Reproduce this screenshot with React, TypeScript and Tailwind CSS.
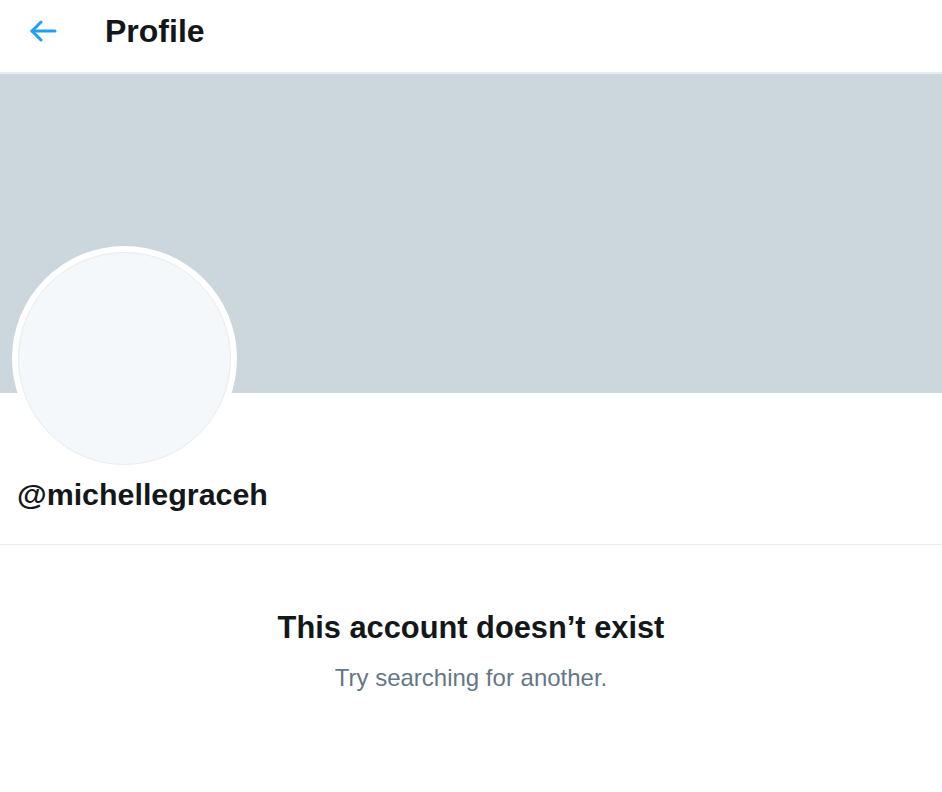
import React from "react";

export default function App() {
  return (
    <div className="w-[942px] h-[792px] bg-white overflow-hidden" style={{ fontFamily: '"Liberation Sans", Arial, Helvetica, sans-serif' }}>
      <header className="h-[74px] border-b-2 border-[#e6ecf0] flex items-start">
        <div className="w-[105px] h-[72px] flex items-center pl-[29px] pb-[11px]">
          <svg width="28" height="22" viewBox="0 0 28 22" fill="none" stroke="#1da1f2" strokeWidth="3" strokeLinecap="round" strokeLinejoin="round">
            <path d="M26 11H3" />
            <path d="M12 2L3 11L12 20" />
          </svg>
        </div>
        <h1 className="pt-[13px] text-[32px] leading-[36px] font-bold text-[#14171a]">Profile</h1>
      </header>
      <div className="h-[319px] bg-[#ccd6dd]" />
      <div className="pl-[12px] -mt-[147px]">
        <div className="w-[225px] h-[225px] rounded-full bg-white p-[6px] relative">
          <div className="w-full h-full rounded-full bg-[#f5f8fa] border border-[#e6ecf0]" />
        </div>
      </div>
      <div className="pl-[17px] pt-[5px] h-[73px]">
        <div className="text-[30.4px] leading-[36px] font-bold text-[#14171a]">@michellegraceh</div>
      </div>
      <div className="h-px bg-[#e6ecf0]" />
      <div className="flex flex-col items-center pt-[65px]">
        <div className="text-[30.8px] leading-[36px] font-bold text-[#14171a]">This account doesn’t exist</div>
        <div className="mt-[16px] text-[24px] leading-[32px] text-[#657786]">Try searching for another.</div>
      </div>
    </div>
  );
}
